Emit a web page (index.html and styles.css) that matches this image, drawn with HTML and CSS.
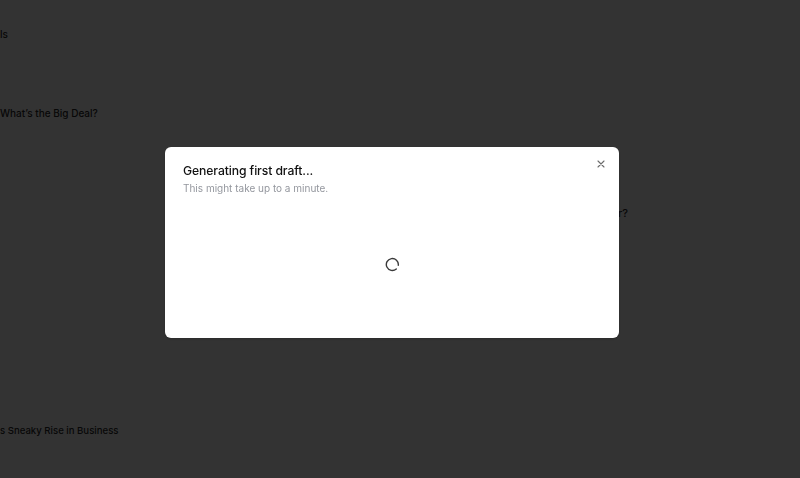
FILE: index.html
```html
<!DOCTYPE html>
<html lang="en">
<head>
<meta charset="utf-8">
<title>Generating first draft</title>
<link rel="stylesheet" href="styles.css">
</head>
<body>
<main class="page">
  <div class="row row-1"><span class="item">ls</span></div>
  <div class="row row-2"><span class="item">What’s the Big Deal?</span></div>
  <div class="row row-3"><span class="item item-right">r?</span></div>
  <div class="row row-4"><span class="item item-small">s Sneaky Rise in Business</span></div>
  <div class="row row-5"><span class="item">&nbsp;</span></div>
</main>

<div class="overlay">
  <section class="modal" role="dialog" aria-labelledby="modal-title">
    <button class="close" aria-label="Close">
      <svg width="8" height="8" viewBox="0 0 8 8"><path d="M1 1L7 7M7 1L1 7" stroke="#6b6b6b" stroke-width="1.1" stroke-linecap="round"/></svg>
    </button>
    <h2 id="modal-title" class="title">Generating first draft...</h2>
    <p class="subtitle">This might take up to a minute.</p>
    <div class="loader">
      <svg width="15" height="15" viewBox="0 0 15 15"><path d="M11.3 12A6 6 0 1 1 13.3 8.2" fill="none" stroke="#3a3a3a" stroke-width="1.4" stroke-linecap="round"/></svg>
    </div>
  </section>
</div>
</body>
</html>
```
FILE: styles.css
```css
* { box-sizing: border-box; }
html, body { margin: 0; padding: 0; }
body {
  width: 800px;
  height: 478px;
  overflow: hidden;
  background: #ffffff;
  font-family: Inter, "Noto Sans", "Liberation Sans", sans-serif;
}
.page {
  display: flex;
  flex-direction: column;
}
.row {
  font-size: 10px;
  font-weight: 500;
  color: #2a2a2a;
  line-height: 14px;
}
.row-1 { padding-top: 27px; }
.row-2 { padding-top: 65px; }
.row-3 { padding-top: 86px; display: flex; justify-content: flex-end; padding-right: 172px; }
.row-4 { padding-top: 203px; }
.item-right { font-size: 11px; }
.item-small { font-size: 9.6px; }
.overlay {
  position: fixed;
  inset: 0;
  background: rgba(0, 0, 0, 0.8);
  display: flex;
  justify-content: center;
  align-items: flex-start;
  padding-top: 147px;
  padding-right: 16px;
}
.modal {
  position: relative;
  width: 454px;
  height: 191px;
  background: #ffffff;
  border-radius: 6px;
  padding: 16px 18px 0 18px;
  display: flex;
  flex-direction: column;
  box-shadow: 0 1px 3px rgba(0,0,0,0.2);
}
.close {
  position: absolute;
  top: 12px;
  right: 13px;
  width: 10px;
  height: 10px;
  padding: 0;
  border: 0;
  background: transparent;
  display: flex;
  align-items: center;
  justify-content: center;
}
.title {
  margin: 0;
  font-size: 12.2px;
  font-weight: 500;
  letter-spacing: -0.1px;
  color: #111111;
  line-height: 16px;
}
.subtitle {
  margin: 3px 0 0 0;
  font-size: 10px;
  color: #94979e;
  line-height: 13px;
}
.loader {
  margin-top: 62px;
  display: flex;
  justify-content: center;
}
```
